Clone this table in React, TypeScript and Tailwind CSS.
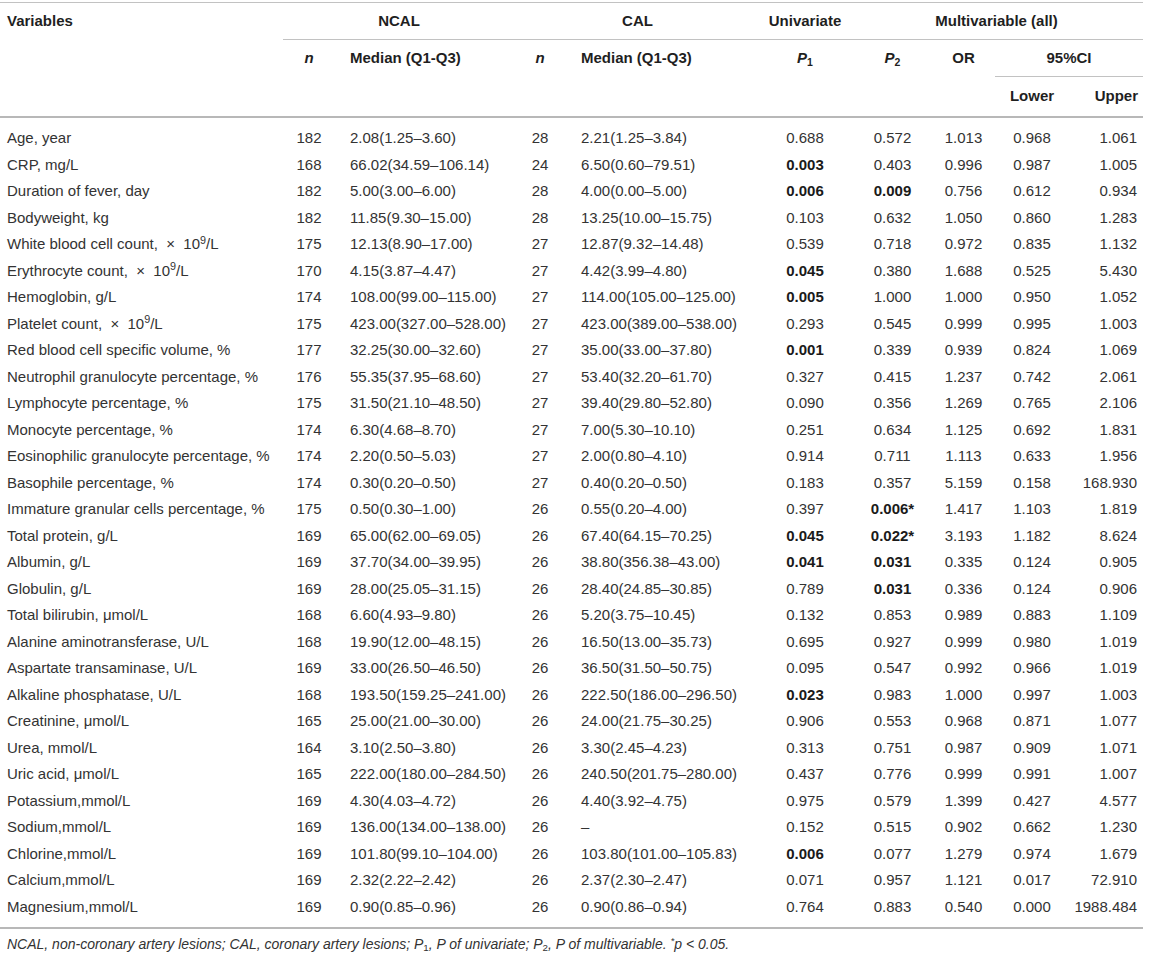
import React from "react";

type Cell = string | { b: string };
type Row = [string, string, string, string, string, Cell, Cell, string, string, string];

const sup9 = (label: string) => {
  const parts = label.split("10^9");
  if (parts.length === 1) return label;
  return (
    <>
      {parts[0]}10<sup className="text-[0.72em]">9</sup>
      {parts[1]}
    </>
  );
};

const rows: Row[] = [
  ["Age, year", "182", "2.08(1.25–3.60)", "28", "2.21(1.25–3.84)", "0.688", "0.572", "1.013", "0.968", "1.061"],
  ["CRP, mg/L", "168", "66.02(34.59–106.14)", "24", "6.50(0.60–79.51)", { b: "0.003" }, "0.403", "0.996", "0.987", "1.005"],
  ["Duration of fever, day", "182", "5.00(3.00–6.00)", "28", "4.00(0.00–5.00)", { b: "0.006" }, { b: "0.009" }, "0.756", "0.612", "0.934"],
  ["Bodyweight, kg", "182", "11.85(9.30–15.00)", "28", "13.25(10.00–15.75)", "0.103", "0.632", "1.050", "0.860", "1.283"],
  ["White blood cell count,  ×  10^9/L", "175", "12.13(8.90–17.00)", "27", "12.87(9.32–14.48)", "0.539", "0.718", "0.972", "0.835", "1.132"],
  ["Erythrocyte count,  ×  10^9/L", "170", "4.15(3.87–4.47)", "27", "4.42(3.99–4.80)", { b: "0.045" }, "0.380", "1.688", "0.525", "5.430"],
  ["Hemoglobin, g/L", "174", "108.00(99.00–115.00)", "27", "114.00(105.00–125.00)", { b: "0.005" }, "1.000", "1.000", "0.950", "1.052"],
  ["Platelet count,  ×  10^9/L", "175", "423.00(327.00–528.00)", "27", "423.00(389.00–538.00)", "0.293", "0.545", "0.999", "0.995", "1.003"],
  ["Red blood cell specific volume, %", "177", "32.25(30.00–32.60)", "27", "35.00(33.00–37.80)", { b: "0.001" }, "0.339", "0.939", "0.824", "1.069"],
  ["Neutrophil granulocyte percentage, %", "176", "55.35(37.95–68.60)", "27", "53.40(32.20–61.70)", "0.327", "0.415", "1.237", "0.742", "2.061"],
  ["Lymphocyte percentage, %", "175", "31.50(21.10–48.50)", "27", "39.40(29.80–52.80)", "0.090", "0.356", "1.269", "0.765", "2.106"],
  ["Monocyte percentage, %", "174", "6.30(4.68–8.70)", "27", "7.00(5.30–10.10)", "0.251", "0.634", "1.125", "0.692", "1.831"],
  ["Eosinophilic granulocyte percentage, %", "174", "2.20(0.50–5.03)", "27", "2.00(0.80–4.10)", "0.914", "0.711", "1.113", "0.633", "1.956"],
  ["Basophile percentage, %", "174", "0.30(0.20–0.50)", "27", "0.40(0.20–0.50)", "0.183", "0.357", "5.159", "0.158", "168.930"],
  ["Immature granular cells percentage, %", "175", "0.50(0.30–1.00)", "26", "0.55(0.20–4.00)", "0.397", { b: "0.006*" }, "1.417", "1.103", "1.819"],
  ["Total protein, g/L", "169", "65.00(62.00–69.05)", "26", "67.40(64.15–70.25)", { b: "0.045" }, { b: "0.022*" }, "3.193", "1.182", "8.624"],
  ["Albumin, g/L", "169", "37.70(34.00–39.95)", "26", "38.80(356.38–43.00)", { b: "0.041" }, { b: "0.031" }, "0.335", "0.124", "0.905"],
  ["Globulin, g/L", "169", "28.00(25.05–31.15)", "26", "28.40(24.85–30.85)", "0.789", { b: "0.031" }, "0.336", "0.124", "0.906"],
  ["Total bilirubin, μmol/L", "168", "6.60(4.93–9.80)", "26", "5.20(3.75–10.45)", "0.132", "0.853", "0.989", "0.883", "1.109"],
  ["Alanine aminotransferase, U/L", "168", "19.90(12.00–48.15)", "26", "16.50(13.00–35.73)", "0.695", "0.927", "0.999", "0.980", "1.019"],
  ["Aspartate transaminase, U/L", "169", "33.00(26.50–46.50)", "26", "36.50(31.50–50.75)", "0.095", "0.547", "0.992", "0.966", "1.019"],
  ["Alkaline phosphatase, U/L", "168", "193.50(159.25–241.00)", "26", "222.50(186.00–296.50)", { b: "0.023" }, "0.983", "1.000", "0.997", "1.003"],
  ["Creatinine, μmol/L", "165", "25.00(21.00–30.00)", "26", "24.00(21.75–30.25)", "0.906", "0.553", "0.968", "0.871", "1.077"],
  ["Urea, mmol/L", "164", "3.10(2.50–3.80)", "26", "3.30(2.45–4.23)", "0.313", "0.751", "0.987", "0.909", "1.071"],
  ["Uric acid, μmol/L", "165", "222.00(180.00–284.50)", "26", "240.50(201.75–280.00)", "0.437", "0.776", "0.999", "0.991", "1.007"],
  ["Potassium,mmol/L", "169", "4.30(4.03–4.72)", "26", "4.40(3.92–4.75)", "0.975", "0.579", "1.399", "0.427", "4.577"],
  ["Sodium,mmol/L", "169", "136.00(134.00–138.00)", "26", "–", "0.152", "0.515", "0.902", "0.662", "1.230"],
  ["Chlorine,mmol/L", "169", "101.80(99.10–104.00)", "26", "103.80(101.00–105.83)", { b: "0.006" }, "0.077", "1.279", "0.974", "1.679"],
  ["Calcium,mmol/L", "169", "2.32(2.22–2.42)", "26", "2.37(2.30–2.47)", "0.071", "0.957", "1.121", "0.017", "72.910"],
  ["Magnesium,mmol/L", "169", "0.90(0.85–0.96)", "26", "0.90(0.86–0.94)", "0.764", "0.883", "0.540", "0.000", "1988.484"],
];

const COLS = "grid grid-cols-[283px_52px_180px_50px_195px_90px_85px_57px_80px_71px]";

const renderCell = (c: Cell) =>
  typeof c === "string" ? c : <span className="font-bold text-[#1a1a1a]">{c.b}</span>;

export default function App() {
  return (
    <div className="bg-white min-h-screen pt-[2px] font-['Liberation_Sans',Arial,sans-serif] text-[15px] text-[#333]">
      <div className="w-[1143px]">
        <div className="h-px bg-[#c2c2c2]" />
        {/* Header */}
        <div className={`${COLS} grid-rows-[37px_37px_39px] font-bold text-[#1f1f1f]`}>
          <div className="col-start-1 row-start-1 flex items-center pl-[7px]">Variables</div>
          <div className="col-start-2 col-span-2 row-start-1 flex items-center justify-center border-b border-[#c2c2c2]">NCAL</div>
          <div className="col-start-4 col-span-2 row-start-1 flex items-center justify-center border-b border-[#c2c2c2]">CAL</div>
          <div className="col-start-6 row-start-1 flex items-center justify-center border-b border-[#c2c2c2]">Univariate</div>
          <div className="col-start-7 col-span-4 row-start-1 flex items-center justify-center border-b border-[#c2c2c2]">Multivariable (all)</div>

          <div className="col-start-2 row-start-2 flex items-center justify-center italic">n</div>
          <div className="col-start-3 row-start-2 flex items-center pl-[15px]">Median (Q1-Q3)</div>
          <div className="col-start-4 row-start-2 flex items-center justify-center italic">n</div>
          <div className="col-start-5 row-start-2 flex items-center pl-[16px]">Median (Q1-Q3)</div>
          <div className="col-start-6 row-start-2 flex items-center justify-center">
            <span>
              <span className="italic">P</span>
              <sub className="text-[0.7em] not-italic">1</sub>
            </span>
          </div>
          <div className="col-start-7 row-start-2 flex items-center justify-center">
            <span>
              <span className="italic">P</span>
              <sub className="text-[0.7em] not-italic">2</sub>
            </span>
          </div>
          <div className="col-start-8 row-start-2 flex items-center justify-center">OR</div>
          <div className="col-start-9 col-span-2 row-start-2 ml-[3px] flex items-center justify-center border-b border-[#c2c2c2]">95%CI</div>

          <div className="col-start-9 row-start-3 flex items-center justify-center">Lower</div>
          <div className="col-start-10 row-start-3 flex items-center justify-end pr-[5px]">Upper</div>
        </div>
        <div className="h-[2px] bg-[#b8b8b8]" />
        {/* Body */}
        <div className="py-[7px]">
          {rows.map((r, i) => (
            <div key={i} className={`${COLS} h-[26.5px] items-center whitespace-pre`}>
              <div className="pl-[7px]">{sup9(r[0])}</div>
              <div className="text-center">{r[1]}</div>
              <div className="pl-[15px]">{r[2]}</div>
              <div className="text-center">{r[3]}</div>
              <div className="pl-[16px]">{r[4]}</div>
              <div className="text-center">{renderCell(r[5])}</div>
              <div className="text-center">{renderCell(r[6])}</div>
              <div className="text-center">{r[7]}</div>
              <div className="text-center">{r[8]}</div>
              <div className="text-right pr-[6px]">{r[9]}</div>
            </div>
          ))}
        </div>
        <div className="h-[2px] bg-[#b8b8b8]" />
        <div className="pl-[7px] pt-[5px] italic text-[14px] text-[#333]">
          NCAL, non-coronary artery lesions; CAL, coronary artery lesions; P<sub className="text-[0.7em] not-italic">1</sub>, P of univariate; P
          <sub className="text-[0.7em] not-italic">2</sub>, P of multivariable. <sup className="text-[0.7em]">*</sup>p &lt; 0.05.
        </div>
      </div>
    </div>
  );
}
